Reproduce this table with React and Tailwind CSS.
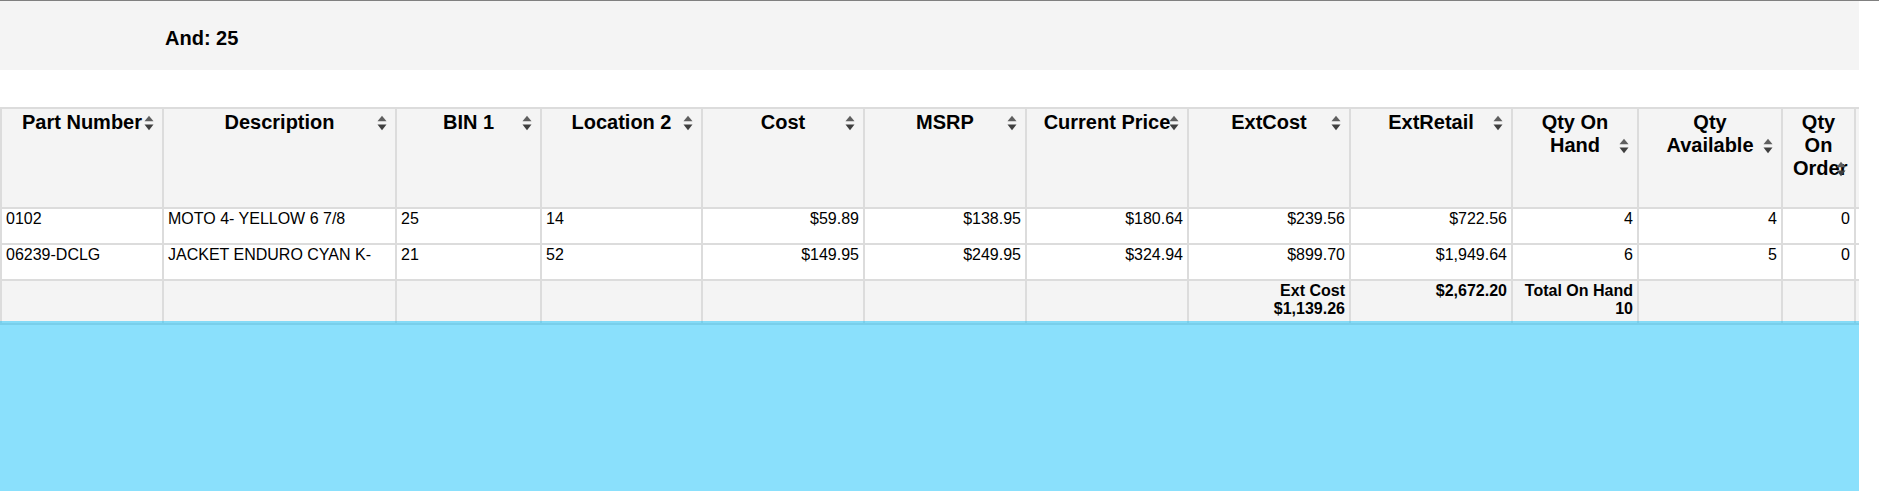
import React from "react";

const font = { fontFamily: '"Liberation Sans", Arial, sans-serif' };

const cols = [
  { h: "Part Number" },
  { h: "Description" },
  { h: "BIN 1" },
  { h: "Location 2" },
  { h: "Cost" },
  { h: "MSRP" },
  { h: "Current Price" },
  { h: "ExtCost" },
  { h: "ExtRetail" },
  { h: "Qty On Hand" },
  { h: "Qty Available" },
  { h: "Qty On Order" },
  { h: "" },
];

const rows = [
  ["0102", "MOTO 4- YELLOW 6 7/8", "25", "14", "$59.89", "$138.95", "$180.64", "$239.56", "$722.56", "4", "4", "0", ""],
  ["06239-DCLG", "JACKET ENDURO CYAN K-", "21", "52", "$149.95", "$249.95", "$324.94", "$899.70", "$1,949.64", "6", "5", "0", ""],
];

function SortIcon() {
  return (
    <svg width="10" height="16" viewBox="0 0 10 16" className="block">
      <polygon points="0.5,6.2 5,0.8 9.5,6.2" fill="#5f5f5f" />
      <polygon points="0.5,9.6 5,15.2 9.5,9.6" fill="#3f3f3f" />
    </svg>
  );
}

export default function App() {
  return (
    <div className="w-[1879px] h-[491px] bg-white border-t border-[#808080] overflow-hidden" style={font}>
      <div className="w-[1859px] overflow-hidden">
        <div className="h-[69px] bg-[#f4f4f4] pl-[165px] pt-[26px]">
          <span className="text-[20px] font-bold leading-[23px] text-black">And: 25</span>
        </div>
        <div className="h-[37px]" />
        <div className="grid grid-cols-[160px_231px_143px_159px_160px_160px_160px_160px_160px_124px_142px_71px_120px] grid-rows-[98px_34px_34px_42px] gap-[2px] p-[2px] bg-[#dcdcdc] w-max text-black">
          {cols.map((c, i) => (
            <div key={"h" + i} className="bg-[#f4f4f4] px-[10px] pt-[2px] text-[20px] font-bold leading-[23px] text-center relative">
              <div className="relative">
                <span>{c.h}</span>
                {i < 12 && (
                  <span className="absolute right-[-2px] bottom-[3px]">
                    <SortIcon />
                  </span>
                )}
              </div>
            </div>
          ))}
          {rows.map((r, ri) =>
            r.map((v, ci) => (
              <div
                key={"r" + ri + "-" + ci}
                className={
                  "bg-white px-[4px] pt-[1px] text-[16px] leading-[18px] whitespace-nowrap overflow-hidden " +
                  (ci < 4 ? "text-left" : "text-right")
                }
              >
                {v}
              </div>
            ))
          )}
          {cols.map((c, i) => (
            <div key={"f" + i} className="bg-[#f4f4f4] px-[4px] pt-[1px] text-[16px] leading-[18px] font-bold text-right">
              {i === 7 && (
                <>
                  <div>Ext Cost</div>
                  <div>$1,139.26</div>
                </>
              )}
              {i === 8 && <div>$2,672.20</div>}
              {i === 9 && <div>Total On Hand 10</div>}
            </div>
          ))}
        </div>
        <div className="relative -mt-[4px] h-[200px] bg-[rgba(21,193,249,0.5)]" />
      </div>
    </div>
  );
}
